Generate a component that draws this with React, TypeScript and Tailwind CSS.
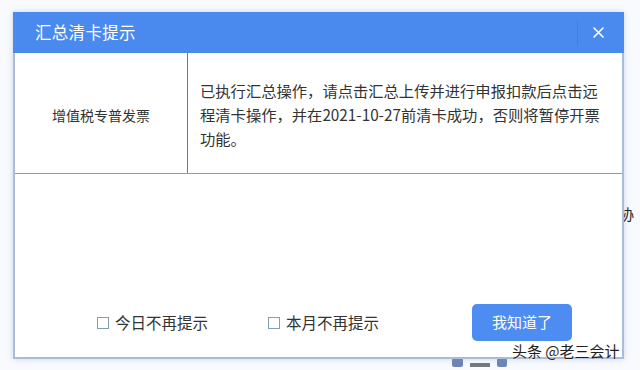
const FONT = { fontFamily: '"Noto Sans CJK SC", "Noto Sans", sans-serif' }

function Checkbox({ label }: { label: string }) {
  return (
    <label className="flex items-center gap-[6px] text-[15.5px] text-[#333]">
      <span className="w-[12px] h-[12px] border border-[#7f9fb5] bg-white" />
      {label}
    </label>
  )
}

export default function App() {
  return (
    <div className="relative w-[640px] h-[370px] overflow-hidden bg-[#f8fafd] pt-[12px] pl-[13px]" style={FONT}>
      {/* background bits peeking past the dialog */}
      <span className="absolute left-[619px] top-[203px] text-[15px] text-[#222]">协</span>
      <div className="absolute left-[452px] top-[358px] flex items-center gap-[7px]">
        <span className="w-[11px] h-[9px] rounded-[2px] bg-[#3f5f98] opacity-75" />
        <span className="w-[20px] h-[4px] mt-[4px] bg-[#3b3f48] opacity-70" />
        <span className="w-[10px] h-[9px] rounded-[2px] bg-[#3f5f98] opacity-75" />
      </div>

      {/* Dialog */}
      <div className="relative w-[611px] h-[347px] flex flex-col bg-white border-x-2 border-b-2 border-[#a9bdd8] shadow-[0_0_6px_rgba(120,150,200,0.35)]">
        {/* Title bar */}
        <div className="h-[41px] -mx-[2px] bg-[#4a89ee] flex items-center text-white">
          <span className="pl-[22px] text-[16.5px] tracking-[0.3px]">汇总清卡提示</span>
          <span className="ml-auto w-px h-[26px] bg-[#437fe0]" />
          <span className="w-[40px] mr-[6px] flex justify-center">
            <svg width="11" height="11" viewBox="0 0 11 11" stroke="white" strokeWidth="1.6" strokeLinecap="round">
              <path d="M1 1L10 10M10 1L1 10" />
            </svg>
          </span>
        </div>

        {/* Table row */}
        <div className="flex h-[121px] border-b border-[#9a9a9a]">
          <div className="w-[173px] border-r border-[#777] flex items-center justify-center text-[14px] text-[#333] pt-[4px]">
            增值税专普发票
          </div>
          <div className="flex-1 pl-[12px] pt-[25px] text-[15.3px] leading-[24px] text-[#333] whitespace-nowrap">
            已执行汇总操作，请点击汇总上传并进行申报扣款后点击远
            <br />
            程清卡操作，并在2021-10-27前清卡成功，否则将暂停开票
            <br />
            功能。
          </div>
        </div>

        <div className="flex-1" />

        {/* Footer */}
        <div className="flex items-center pl-[82px] pr-[50px] pb-[16px]">
          <Checkbox label="今日不再提示" />
          <span className="w-[60px]" />
          <Checkbox label="本月不再提示" />
          <button className="ml-auto w-[100px] h-[37px] rounded-[5px] bg-[#4d8cf1] text-white text-[15px]">
            我知道了
          </button>
        </div>
      </div>

      {/* Watermark */}
      <span className="absolute left-[512px] top-[340px] text-[15px] text-[#1e1e1e] [text-shadow:0_0_2px_white]">
        头条 @老三会计
      </span>
    </div>
  )
}
